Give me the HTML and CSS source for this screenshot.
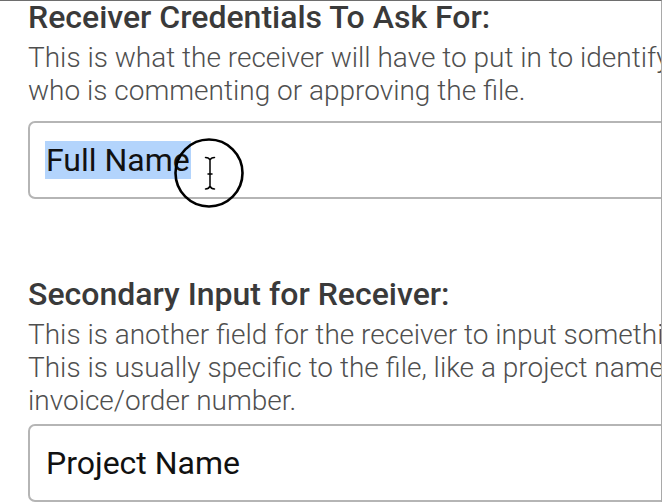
FILE: index.html
```html
<!DOCTYPE html>
<html lang="en">
<head>
<meta charset="utf-8">
<title>Receiver settings</title>
<link rel="stylesheet" href="styles.css">
</head>
<body>
<div class="frame">
  <section class="field field-first">
    <h2 class="field-title">Receiver Credentials To Ask For:</h2>
    <p class="field-desc">This is what the receiver will have to put in to identify<br>who is commenting or approving the file.</p>
    <div class="input"><span class="input-value selected">Full Name</span></div>
  </section>
  <section class="field field-second">
    <h2 class="field-title">Secondary Input for Receiver:</h2>
    <p class="field-desc">This is another field for the receiver to input something.<br>This is usually specific to the file, like a project name or<br>invoice/order number.</p>
    <div class="input input-close"><span class="input-value">Project Name</span></div>
  </section>
  <svg class="cursor" width="80" height="80" viewBox="0 0 80 80" aria-hidden="true">
    <circle cx="40" cy="40" r="33.5" fill="none" stroke="#000" stroke-width="2.6"/>
    <path d="M36.5 24.5 Q40 24.5 41 27 Q42 24.5 45.5 24.5 M41 27 V53 M36.5 56 Q40 56 41 53 Q42 56 45.5 56 M39 41 H43" fill="none" stroke="#000" stroke-width="1.5" stroke-linecap="round"/>
  </svg>
</div>
</body>
</html>
```
FILE: styles.css
```css
html, body {
  margin: 0;
  padding: 0;
  background: #fff;
}
.frame {
  position: relative;
  width: 662px;
  height: 502px;
  box-sizing: border-box;
  border-top: 1px solid #6e6e6e;
  border-right: 1px solid #a9a9a9;
  overflow: hidden;
  padding-left: 28px;
  font-family: Roboto, "Liberation Sans", sans-serif;
}
.field {
  display: flex;
  flex-direction: column;
  align-items: flex-start;
}
.field-second {
  margin-top: 79px;
}
.field-title {
  margin: 0;
  font-size: 32px;
  line-height: 33px;
  font-weight: 500;
  color: #3a3a3a;
  white-space: nowrap;
}
.field-desc {
  margin: 6.5px 0 0;
  font-size: 28px;
  line-height: 33.3px;
  font-weight: 300;
  color: #4f4f4f;
  white-space: nowrap;
}
.input {
  margin-top: 14px;
  width: 720px;
  height: 78px;
  box-sizing: border-box;
  border: 2px solid #b5b5b5;
  border-radius: 7px;
  padding: 18px 0 0 15px;
}
.input-close {
  margin-top: 6.5px;
}
.input-value {
  display: inline-block;
  font-size: 32px;
  line-height: 38px;
  font-weight: 400;
  color: #111;
  padding: 0 1px;
  white-space: nowrap;
}
.input-value.selected {
  background: #b3d4fc;
}
.cursor {
  position: absolute;
  left: 169px;
  top: 132px;
}
```
